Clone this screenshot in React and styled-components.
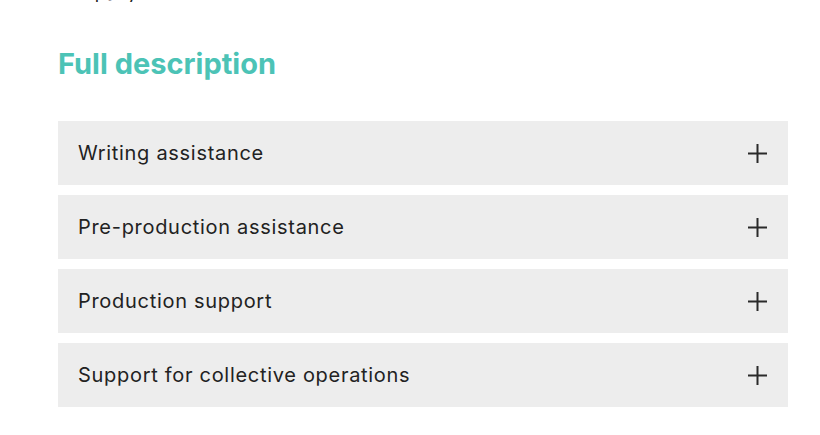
import React from "react";
import styled, { createGlobalStyle } from "styled-components";

const Global = createGlobalStyle`
  html, body { margin: 0; padding: 0; background: #ffffff; }
  body { font-family: "Inter", "Liberation Sans", sans-serif; }
`;

const Page = styled.div`
  width: 820px;
  height: 435px;
  overflow: hidden;
  padding: 0 32px 0 58px;
  box-sizing: border-box;
`;

const Clipped = styled.div`
  height: 2px;
  overflow: hidden;
`;

const ClippedText = styled.div`
  font-size: 18px;
  line-height: 18px;
  color: #222;
  margin-top: -15px;
  margin-left: -3px;
`;

const Heading = styled.h2`
  margin: 0;
  padding-top: 44px;
  font-size: 29px;
  line-height: 36px;
  font-weight: 700;
  color: #4cc3b6;
  letter-spacing: 0;
`;

const List = styled.div`
  margin-top: 39px;
  display: flex;
  flex-direction: column;
  gap: 10px;
  width: 730px;
`;

const Row = styled.div`
  height: 64px;
  background: #ededed;
  display: flex;
  align-items: center;
  justify-content: space-between;
  padding: 0 21px 0 20px;
  box-sizing: border-box;
  cursor: pointer;
`;

const Label = styled.span`
  font-size: 20px;
  letter-spacing: 0.7px;
  color: #222222;
  font-weight: 400;
`;

const Plus = styled.svg`
  width: 19px;
  height: 19px;
  flex: none;
`;

const items = [
  "Writing assistance",
  "Pre-production assistance",
  "Production support",
  "Support for collective operations",
];

export default function App() {
  return (
    <Page>
      <Global />
      <Clipped>
        <ClippedText>Company</ClippedText>
      </Clipped>
      <Heading>Full description</Heading>
      <List>
        {items.map((t) => (
          <Row key={t}>
            <Label>{t}</Label>
            <Plus viewBox="0 0 19 19">
              <path d="M9.5 0v19M0 9.5h19" stroke="#2a2a2a" strokeWidth="2" fill="none" />
            </Plus>
          </Row>
        ))}
      </List>
    </Page>
  );
}
